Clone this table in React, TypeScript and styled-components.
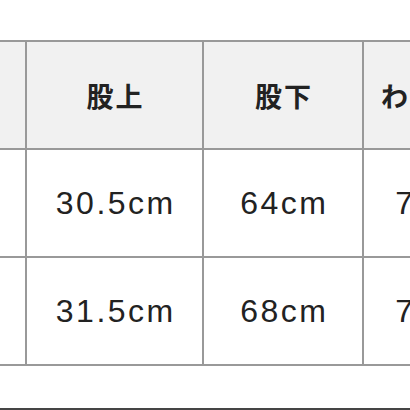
import React from 'react';
import styled, { createGlobalStyle } from 'styled-components';

const GlobalStyle = createGlobalStyle`
  html, body {
    margin: 0;
    padding: 0;
    background: #ffffff;
  }
`;

const Page = styled.div`
  display: flex;
  flex-direction: column;
  width: 410px;
  height: 410px;
  padding-top: 40px;
  box-sizing: border-box;
  overflow: hidden;
  background: #ffffff;
`;

const Table = styled.div`
  display: grid;
  grid-template-columns: 25px 175px 158px 148px;
  grid-auto-rows: 106px;
  gap: 2px;
  padding: 2px 0;
  width: max-content;
  background: #999999;
`;

const Cell = styled.div<{ $head?: boolean }>`
  display: flex;
  align-items: center;
  justify-content: center;
  background: ${(p) => (p.$head ? '#f1f1f1' : '#ffffff')};
  color: #222222;
  font-family: ${(p) =>
    p.$head
      ? '"Noto Sans CJK JP", "Noto Sans", sans-serif'
      : '"Liberation Sans", Arial, sans-serif'};
  font-weight: ${(p) => (p.$head ? 700 : 400)};
  font-size: ${(p) => (p.$head ? '27px' : '32px')};
  letter-spacing: ${(p) => (p.$head ? '2px' : '2.5px')};
  padding-left: ${(p) => (p.$head ? '2px' : '2.5px')};
  white-space: nowrap;
  overflow: hidden;
`;

const Spacer = styled.div`
  flex: 1;
`;

const Divider = styled.div`
  height: 2px;
  background: #454545;
`;

const header = ['', '股上', '股下', 'わたり幅'];
const rows = [
  ['', '30.5cm', '64cm', '72cm'],
  ['', '31.5cm', '68cm', '74cm'],
];

export default function App() {
  return (
    <>
      <GlobalStyle />
      <Page>
        <Table>
          {header.map((h, i) => (
            <Cell $head key={`h${i}`}>
              {h}
            </Cell>
          ))}
          {rows.map((r, ri) =>
            r.map((v, ci) => <Cell key={`${ri}-${ci}`}>{v}</Cell>)
          )}
        </Table>
        <Spacer />
        <Divider />
      </Page>
    </>
  );
}
